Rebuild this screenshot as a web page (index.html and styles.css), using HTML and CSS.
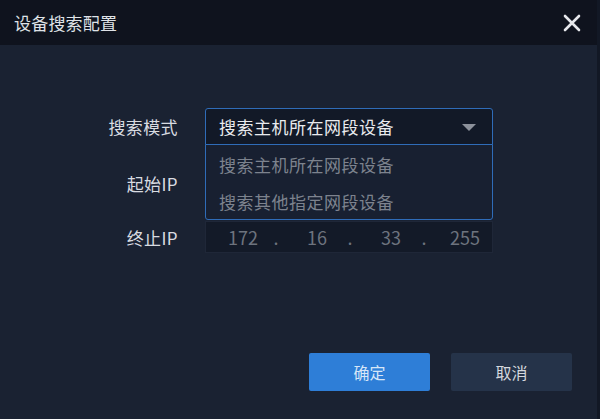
FILE: index.html
```html
<!DOCTYPE html>
<html lang="zh-CN">
<head>
<meta charset="utf-8">
<title>设备搜索配置</title>
<link rel="stylesheet" href="styles.css">
</head>
<body>
<div class="dialog">
  <header class="titlebar">
    <span class="title">设备搜索配置</span>
    <svg class="close" width="18" height="18" viewBox="0 0 18 18"><path d="M2 2 L16 16 M16 2 L2 16" stroke="#e6e8ec" stroke-width="2.6" stroke-linecap="round"/></svg>
  </header>
  <main class="content">
    <div class="form">
      <div class="label">搜索模式</div>
      <div class="select-wrap">
        <div class="select">
          <span class="select-text">搜索主机所在网段设备</span>
          <span class="arrow"></span>
        </div>
        <ul class="menu">
          <li class="option">搜索主机所在网段设备</li>
          <li class="option">搜索其他指定网段设备</li>
        </ul>
      </div>
      <div class="label">起始IP</div>
      <div class="ipfield hidden-field"></div>
      <div class="label">终止IP</div>
      <div class="ipfield">
        <span class="seg">172</span><span class="dot">.</span><span class="seg">16</span><span class="dot">.</span><span class="seg">33</span><span class="dot">.</span><span class="seg">255</span>
      </div>
    </div>
    <div class="footer">
      <button class="btn primary">确定</button>
      <button class="btn secondary">取消</button>
    </div>
  </main>
</div>
</body>
</html>
```

FILE: styles.css
```css
* { box-sizing: border-box; margin: 0; padding: 0; }
html, body { width: 600px; height: 419px; overflow: hidden; }
body {
  background: #1a2232;
  font-family: "Noto Sans CJK SC", "Noto Sans", sans-serif;
  color: #e6e8ec;
}
.dialog {
  width: 600px;
  height: 419px;
  display: flex;
  flex-direction: column;
  border-right: 3px solid #121825;
}
.titlebar {
  height: 45px;
  background: #0f131e;
  display: flex;
  align-items: center;
  justify-content: space-between;
  padding: 0 16px 0 14px;
}
.title {
  font-size: 17px;
  color: #dfe2e7;
  letter-spacing: 0.2px;
}
.close { display: block; margin-top: 1px; }
.content {
  flex: 1;
  display: flex;
  flex-direction: column;
  padding-top: 63px;
}
.form {
  display: grid;
  grid-template-columns: 178px 288px;
  grid-template-rows: 37px 37px 32px;
  column-gap: 27px;
  row-gap: 19.5px;
  align-items: center;
}
.label {
  text-align: right;
  font-size: 17px;
  color: #d9dce1;
  letter-spacing: 0.4px;
}
.select-wrap { position: relative; height: 37px; z-index: 2; }
.select {
  height: 37px;
  border: 1px solid #2f6cb8;
  border-radius: 3px 3px 0 0;
  background: #121927;
  display: flex;
  align-items: center;
  justify-content: space-between;
  padding: 0 16px 0 13px;
}
.select-text {
  font-size: 17px;
  color: #e9ebee;
  letter-spacing: 0.5px;
}
.arrow {
  width: 0; height: 0;
  border-left: 7px solid transparent;
  border-right: 7px solid transparent;
  border-top: 7px solid #8c919b;
  margin-top: 2px;
}
.menu {
  position: absolute;
  left: 0; right: 0;
  top: 36px;
  height: 76px;
  list-style: none;
  background: #182031;
  border: 1px solid #2f6cb8;
  border-radius: 0 0 3px 3px;
  padding-top: 1px;
}
.option {
  height: 37px;
  line-height: 37px;
  padding-left: 13px;
  font-size: 17px;
  color: #7d838e;
  letter-spacing: 0.5px;
}
.ipfield {
  height: 32px;
  background: #131a28;
  border: 1px solid #1f2738;
  display: flex;
  align-items: center;
  padding-left: 21px;
  font-size: 18px;
  color: #6d737e;
}
.hidden-field { height: 37px; }
.seg { width: 32px; text-align: center; }
.dot { width: 42px; text-align: center; padding-right: 8px; }
.footer {
  margin-top: auto;
  display: flex;
  justify-content: flex-end;
  gap: 21px;
  padding: 0 25px 28px 0;
}
.btn {
  width: 121px;
  height: 38px;
  border: none;
  border-radius: 2px;
  font-family: "Noto Sans CJK SC", sans-serif;
  font-size: 16px;
}
.primary { background: #2e7ed7; color: #d6e6f7; }
.secondary { background: #253349; color: #d4d8de; }
```
